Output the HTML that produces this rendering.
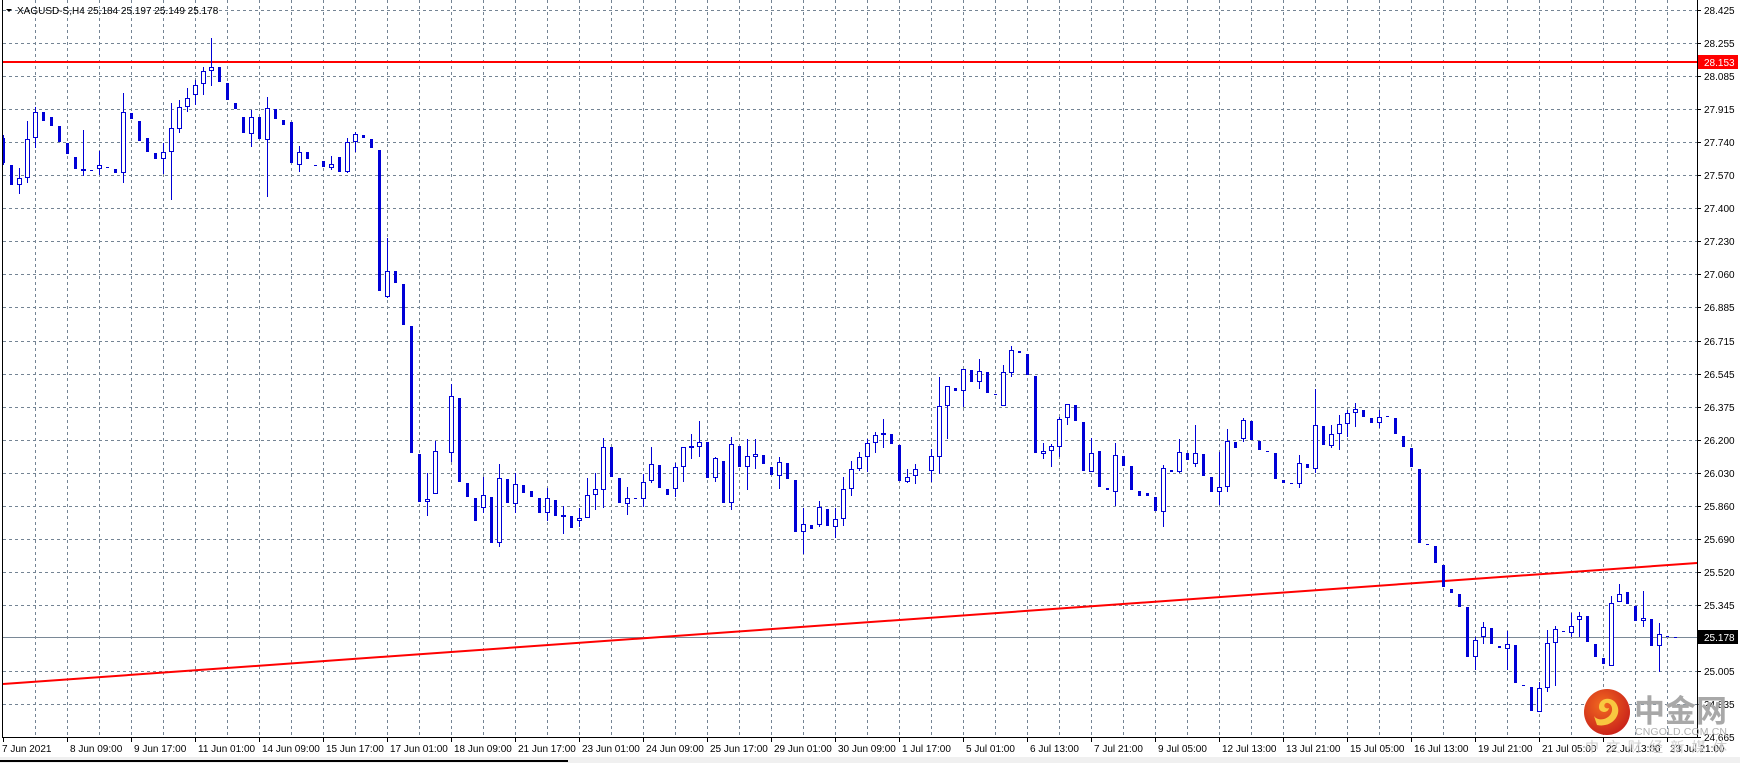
<!DOCTYPE html>
<html><head><meta charset="utf-8"><style>
html,body{margin:0;padding:0;background:#fff;}
body{width:1740px;height:763px;overflow:hidden;position:relative;font-family:"Liberation Sans",sans-serif;}
svg{position:absolute;left:0;top:0;}
</style></head><body>
<svg id="s" width="1740" height="763" xmlns="http://www.w3.org/2000/svg" font-family="Liberation Sans, sans-serif"></svg>
<script>
var D=[
['d',138,163,135,165],['d',165,185],['u',178,185,168,194],['u',139,178,121,183],['u',112,138,107,148],
['d',112,121],['d',117,126],['d',126,142],['d',143,154],['d',157,169],
['u',169,170,130,176],['d',170,171],['u',165,169,151,175],['d',167,168],['d',169,173],
['u',112,173,93,183],['d',113,119],['d',121,141],['d',138,152],['d',153,159],
['u',152,159,143,174],['u',128,152,103,200],['u',107,129,100,133],['u',98,107,88,112],['u',85,95,80,105],
['u',71,84,67,95],['u',67,71,38,86],['d',67,82],['d',83,100],['d',103,109],
['d',117,133],['u',117,134,110,147],['d',117,139],['u',108,140,97,197],['d',109,119],
['d',120,125],['d',122,163],['u',152,165,146,172],['d',152,159],['d',165,166],
['d',161,167],['u',164,168,156,170],['d',157,172],['u',142,172,138,173],['u',134,142,132,152],
['d',135,138],['d',139,148],['d',150,291],['u',271,297,238,298],['d',271,283],
['d',284,325],['d',326,453],['d',454,502],['u',499,502,473,516],['u',451,494,441,494],
null,['u',396,453,384,462],['d',398,482],['d',483,497],['d',498,521],
['u',495,508,477,513],['d',497,543],['u',478,543,464,547],['d',479,503],['u',484,504,473,513],
['d',485,493],['d',491,497],['d',498,513],['u',498,513,488,521],['d',500,516],
['u',515,517,506,534],['d',516,528],['u',518,521,508,527],['u',495,518,478,518],['u',489,495,473,510],
['u',447,490,438,508],['d',447,477],['d',478,503],['u',498,504,487,515],['d',498,499],
['u',482,499,474,507],['u',464,481,447,483],['d',465,488],['d',489,495],['u',467,489,463,497],
['u',447,467,447,482],['u',446,447,434,459],['u',442,447,421,457],['d',442,478],['u',458,478,457,482],
['d',461,503],['u',444,503,437,510],['d',446,467],['u',456,467,439,490],['u',454,457,439,469],
['d',455,464],['d',467,475],['u',462,476,457,489],['d',463,479],['d',480,532],
['u',524,532,508,554],['d',525,529],['u',507,525,501,527],['d',509,526],['u',519,527,508,538],
['u',489,519,477,526],['u',469,489,461,496],['u',457,469,452,471],['u',443,457,439,472],['u',435,443,432,453],
['u',433,434,419,448],['d',434,444],['d',445,481],['u',477,482,469,483],['u',469,476,464,484],
null,['u',456,471,449,482],['u',406,457,377,474],['u',386,406,386,439],['d',388,391],
['u',369,391,369,407],['d',370,382],['u',371,382,359,389],['d',372,393],['d',394,395],
['u',372,406,365,406],['u',350,373,346,377],['d',351,353],['d',354,375],['d',376,453],
['u',451,454,443,459],['u',446,451,444,467],['u',419,447,417,457],['u',404,418,404,425],['d',405,421],
['d',422,471],['u',453,472,438,472],['d',451,487],['d',488,490],['u',455,492,443,506],
['d',456,466],['d',466,490],['d',491,496],['d',493,496],['d',497,511],
['u',468,512,465,527],['d',470,472],['u',452,472,439,473],['d',453,460],['u',453,464,425,467],
['d',454,476],['d',477,492],['u',487,492,452,505],['u',441,487,429,492],['d',442,448],
['u',420,439,418,442],['d',421,440],['d',441,450],['d',451,452],['d',453,479],
['d',480,483],['d',483,484],['u',463,484,455,488],['d',464,468],['u',425,469,389,473],
['d',426,445],['u',434,446,425,448],['u',424,434,415,450],['u',413,424,410,437],['u',409,413,403,427],
['d',410,417],['d',418,423],['u',417,423,410,428],['d',416,417],['d',418,434],
['d',436,447],['d',448,467],['d',469,543],['d',544,545],['d',546,563],
['d',565,587],['d',589,593],['d',594,607],['d',607,657],['u',640,657,637,670],
['u',627,637,622,644],['d',628,644],['d',646,648],['u',644,649,631,670],['d',645,683],
['d',685,686],['d',687,711],['u',688,712,682,712],['u',643,688,630,692],['u',629,643,626,686],
['d',631,632],['u',626,633,613,637],['u',616,620,612,637],['d',616,642],['d',644,657],
['d',658,664],['u',603,666,596,666],['u',594,602,584,602],['d',592,604],['d',606,621],
['u',618,621,591,627],['d',619,646],['u',634,646,623,672],['d',636,637],['d',637,638]
];
var o='';
var L=3,R=1697,T=0,B=737;
var gy=[];for(var k=0;k<=22;k++)gy.push(10+33.05*k);
for(var k=0;k<22;k++){var y=Math.round(gy[k])+0.5;if(k==19)continue;o+='<line x1="'+L+'" y1="'+y+'" x2="'+R+'" y2="'+y+'" stroke="#748494" stroke-dasharray="3,3"/>';}
for(var x=35;x<R;x+=32){o+='<line x1="'+(x+0.5)+'" y1="'+T+'" x2="'+(x+0.5)+'" y2="'+B+'" stroke="#748494" stroke-dasharray="3,3"/>';}
o+='<line x1="'+L+'" y1="637.5" x2="'+R+'" y2="637.5" stroke="#7a8896" stroke-width="1"/>';
o+='<line x1="'+L+'" y1="62" x2="'+R+'" y2="62" stroke="#ff0000" stroke-width="2"/>';
o+='<line x1="'+L+'" y1="684" x2="'+R+'" y2="563" stroke="#ff0000" stroke-width="2"/>';
var C='#0000d6';
for(var i=0;i<D.length;i++){var d=D[i];if(!d)continue;var cx=3+8*i;
 var t=d[1],b=d[2],h=d.length>3?d[3]:t,l=d.length>3?d[4]:b;
 if(b-t<1)b=t+1;
 o+='<line x1="'+(cx+0.5)+'" y1="'+h+'" x2="'+(cx+0.5)+'" y2="'+l+'" stroke="'+C+'"/>';
 if(d[0]=='d'){o+='<rect x="'+(cx-1)+'" y="'+t+'" width="3" height="'+(b-t)+'" fill="'+C+'"/>';}
 else{o+='<rect x="'+(cx-1.5)+'" y="'+(t+0.5)+'" width="4" height="'+Math.max(1,b-t-1)+'" fill="#fff" stroke="'+C+'"/>';}
}
o+='<line x1="2.5" y1="0" x2="2.5" y2="737" stroke="#000"/>';
o+='<line x1="'+(R+0.5)+'" y1="0" x2="'+(R+0.5)+'" y2="738" stroke="#000"/>';
o+='<line x1="2" y1="737.5" x2="1698" y2="737.5" stroke="#000"/>';
var lab=['28.425','28.255','28.085','27.915','27.740','27.570','27.400','27.230','27.060','26.885','26.715','26.545','26.375','26.200','26.030','25.860','25.690','25.520','25.345','','25.005','24.835','24.665'];
for(var k=0;k<=22;k++){var y=Math.round(gy[k]);if(k==19)continue;o+='<line x1="1698" y1="'+(y+0.5)+'" x2="1701" y2="'+(y+0.5)+'" stroke="#000"/>';o+='<text x="1704" y="'+(y+4)+'" font-size="10" fill="#000">'+lab[k]+'</text>';}
o+='<rect x="1698" y="55" width="40" height="14" fill="#ff0000"/><text x="1704" y="66" font-size="10" fill="#fff">28.153</text>';
o+='<rect x="1698" y="630" width="40" height="14" fill="#000"/><text x="1704" y="641" font-size="10" fill="#fff">25.178</text>';
var dl=['7 Jun 2021','8 Jun 09:00','9 Jun 17:00','11 Jun 01:00','14 Jun 09:00','15 Jun 17:00','17 Jun 01:00','18 Jun 09:00','21 Jun 17:00','23 Jun 01:00','24 Jun 09:00','25 Jun 17:00','29 Jun 01:00','30 Jun 09:00','1 Jul 17:00','5 Jul 01:00','6 Jul 13:00','7 Jul 21:00','9 Jul 05:00','12 Jul 13:00','13 Jul 21:00','15 Jul 05:00','16 Jul 13:00','19 Jul 21:00','21 Jul 05:00','22 Jul 13:00','23 Jul 21:00'];
for(var j=0;j<dl.length;j++){var x=3+64*j;o+='<line x1="'+(x+0.5)+'" y1="738" x2="'+(x+0.5)+'" y2="742" stroke="#000"/>';o+='<text x="'+(j==0?2:x+3)+'" y="752" font-size="10" fill="#000">'+dl[j]+'</text>';}
o+='<path d="M6 9 L12 9 L9 12 Z" fill="#000"/><text x="17" y="14" font-size="10" fill="#000">XAGUSD-S,H4  25.184 25.197 25.149 25.178</text>';
o+='<rect x="0" y="757" width="1740" height="6" fill="#f0f0f0"/><rect x="0" y="760" width="568" height="2" fill="#000"/>';
o+='<defs><radialGradient id="g" cx="40%" cy="35%" r="70%"><stop offset="0" stop-color="#f26a20"/><stop offset="1" stop-color="#c8201a"/></radialGradient></defs>';
o+='<circle cx="1607" cy="712" r="23" fill="url(#g)"/>';
o+='<path d="M1597 725 C1612 728 1622 715 1617 705 C1613 696 1600 697 1599 706 C1598 713 1608 714 1609 708 C1603 710 1603 702 1608 703 C1614 705 1614 716 1604 719 C1600 720 1596 719 1594 716 Z" fill="#f8c840"/>';
o+='<text x="1634" y="722" font-size="31" font-weight="bold" fill="#a8a8a8" font-family="Noto Sans CJK SC, WenQuanYi Zen Hei, sans-serif" textLength="93">中金网</text>';
o+='<text x="1635" y="735" font-size="10.5" fill="#b0b0b0" textLength="92">CNGOLD.COM.CN</text>';
o+='<text x="1585" y="752" font-size="14" fill="#cfcfcf" font-family="Noto Sans CJK SC, sans-serif" textLength="142">中文财经新媒体</text>';
document.getElementById('s').innerHTML=o;
</script>
</body></html>
